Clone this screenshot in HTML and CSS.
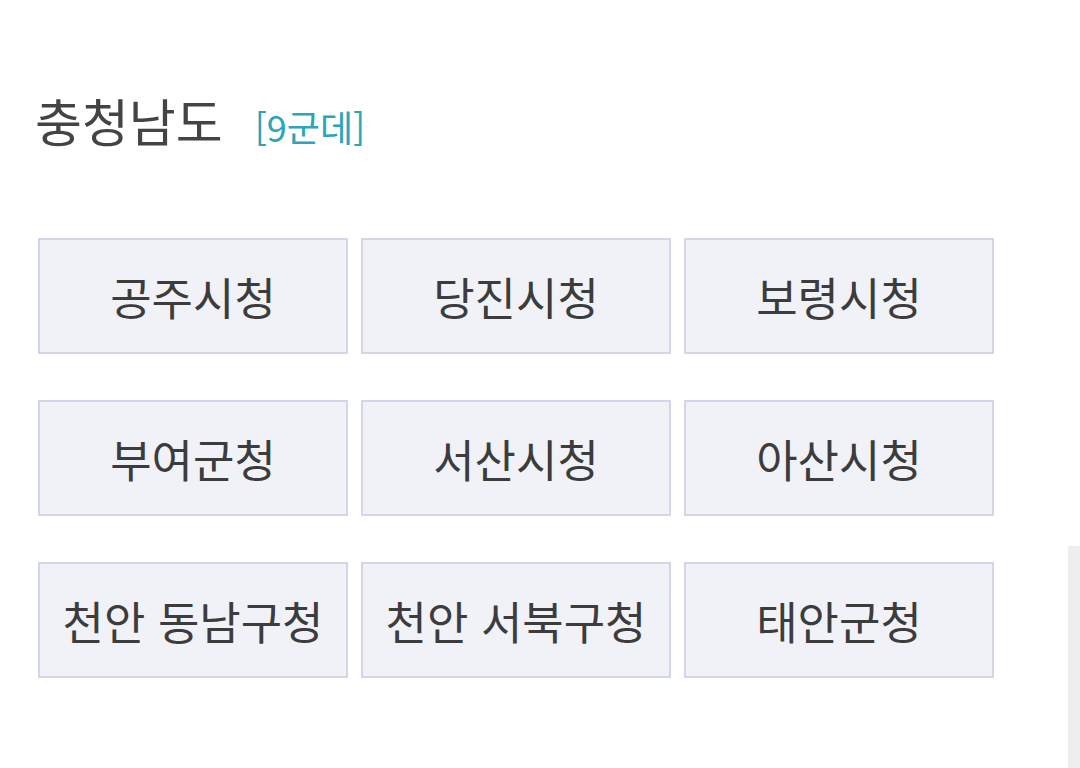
FILE: index.html
```html
<!DOCTYPE html>
<html lang="ko">
<head>
<meta charset="utf-8">
<link rel="stylesheet" href="styles.css">
</head>
<body>
<main class="page">
  <h2 class="title">충청남도<span class="count">[9군데]</span></h2>
  <ul class="grid">
    <li class="item">공주시청</li>
    <li class="item">당진시청</li>
    <li class="item">보령시청</li>
    <li class="item">부여군청</li>
    <li class="item">서산시청</li>
    <li class="item">아산시청</li>
    <li class="item">천안 동남구청</li>
    <li class="item">천안 서북구청</li>
    <li class="item">태안군청</li>
  </ul>
</main>
<div class="scroll-thumb"></div>
</body>
</html>
```
FILE: styles.css
```css
html, body {
  margin: 0;
  padding: 0;
  background: #ffffff;
  font-family: "Noto Sans CJK KR", "Noto Sans", sans-serif;
}
.page {
  padding: 90px 0 0 35px;
}
.title {
  margin: 0;
  height: 60px;
  font-size: 51px;
  font-weight: 400;
  line-height: 60px;
  color: #444444;
  display: flex;
  align-items: baseline;
}
.count {
  margin-left: 32px;
  font-size: 36px;
  color: #2aa5ba;
}
.grid {
  list-style: none;
  margin: 88px 0 0 3px;
  padding: 0;
  display: grid;
  grid-template-columns: repeat(3, 310px);
  column-gap: 13px;
  row-gap: 46px;
}
.item {
  box-sizing: border-box;
  height: 116px;
  border: 2px solid #d3d6e8;
  background: #f1f2f8;
  display: flex;
  align-items: center;
  justify-content: center;
  font-size: 45px;
  color: #3c3c3c;
}
.scroll-thumb {
  position: fixed;
  right: 0;
  top: 546px;
  width: 12px;
  bottom: 0;
  background: #eeeeee;
}
```
